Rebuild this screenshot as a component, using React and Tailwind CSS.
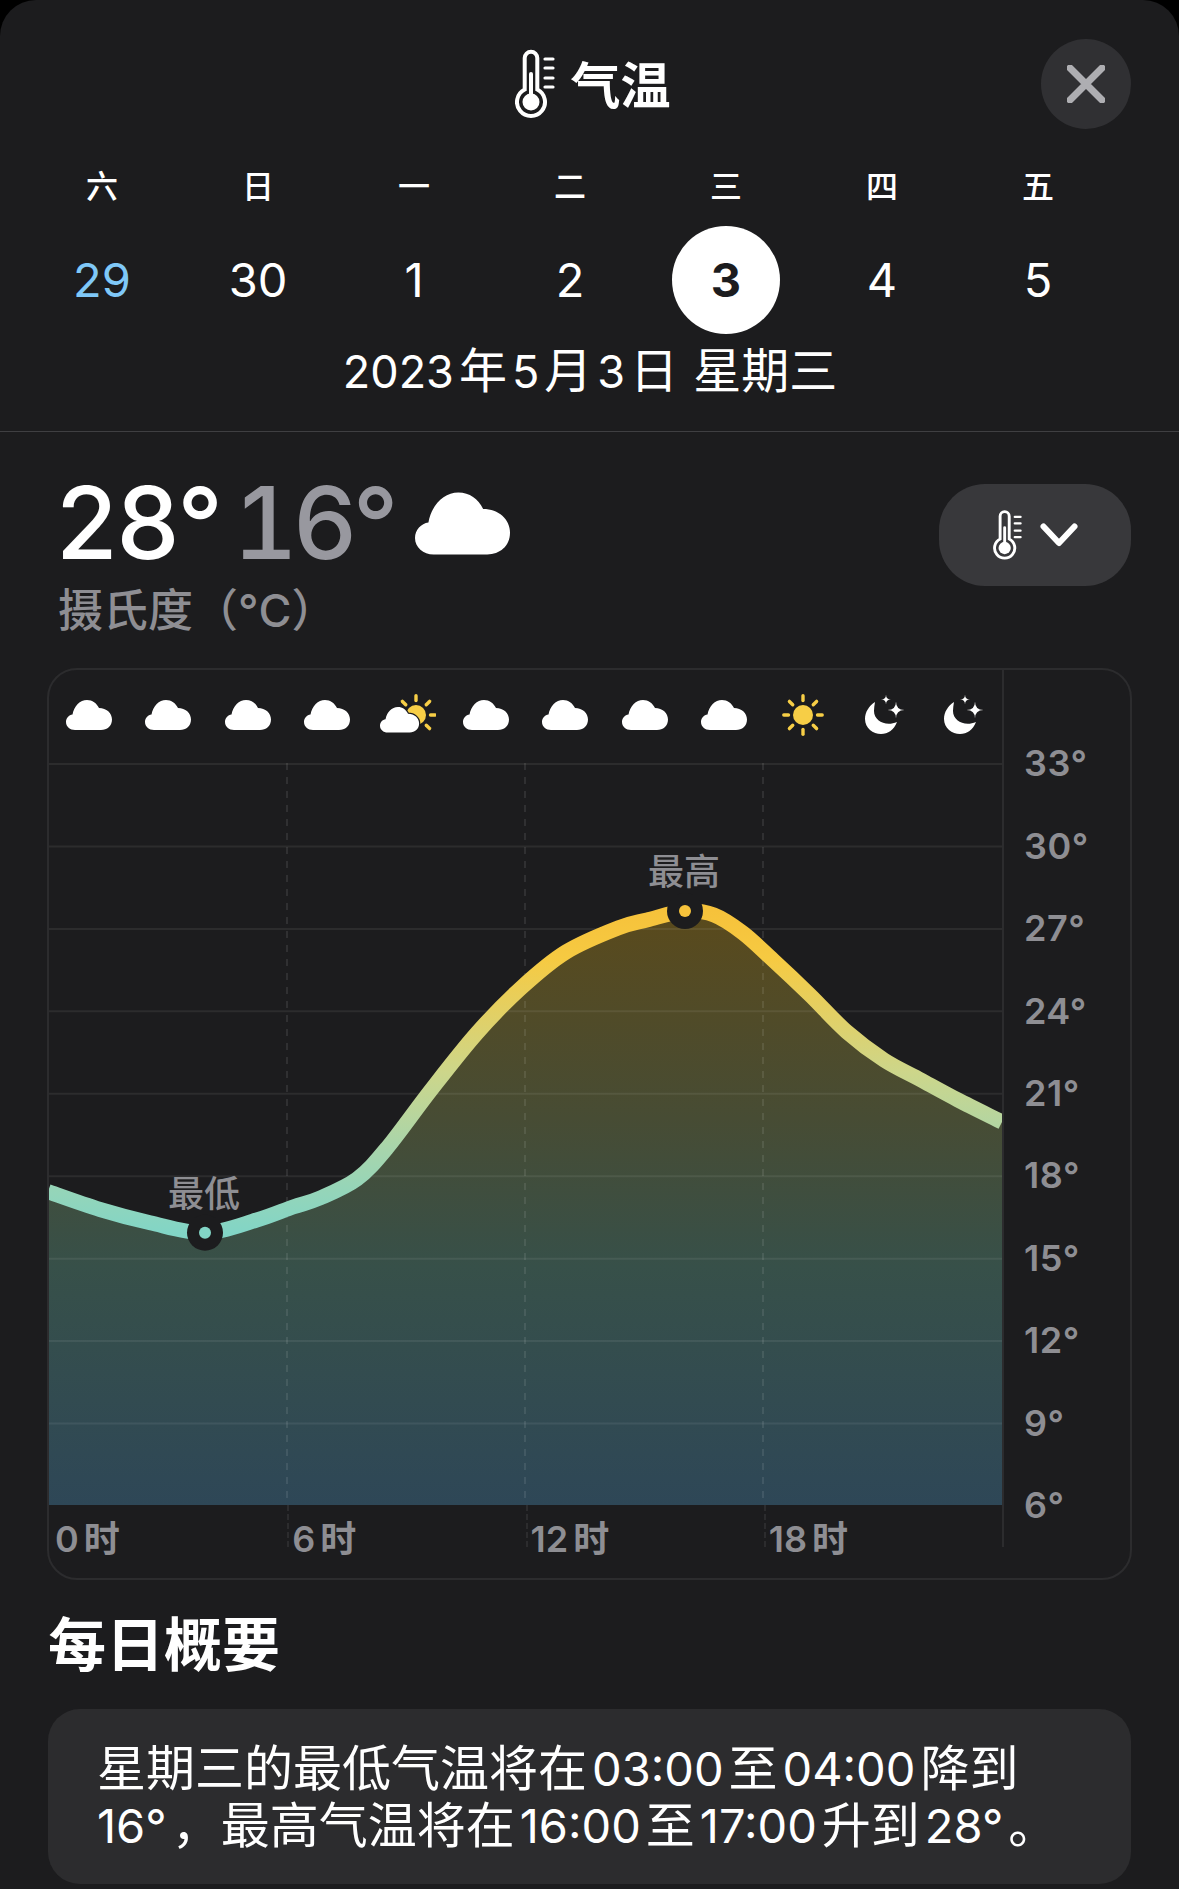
import React from "react";

const PTS = [[48,1191.7],[100,1209.5],[150,1222.7],[205,1232.7],[256.7,1220],[293,1207],[320,1198],[357,1179],[387,1148],[431,1090],[477,1033],[521,988],[566,952],[618,928],[647,920],[685,911],[714,915],[743,933],[773,960],[810,995],[847,1032],[884,1060],[921,1080],[958,1100],[1002,1122]]
  .map(([x, y]) => [x - 49, y - 763]);

function curve(p) {
  let d = `M${p[0][0]} ${p[0][1]}`;
  for (let i = 0; i < p.length - 1; i++) {
    const a = p[Math.max(i - 1, 0)], b = p[i], c = p[i + 1], e = p[Math.min(i + 2, p.length - 1)];
    const c1 = [b[0] + (c[0] - a[0]) / 6, b[1] + (c[1] - a[1]) / 6];
    const c2 = [c[0] - (e[0] - b[0]) / 6, c[1] - (e[1] - b[1]) / 6];
    d += ` C${c1[0].toFixed(1)} ${c1[1].toFixed(1)} ${c2[0].toFixed(1)} ${c2[1].toFixed(1)} ${c[0].toFixed(1)} ${c[1].toFixed(1)}`;
  }
  return d;
}
const LINE = curve(PTS);
const AREA = `${LINE} L953 742 L-1 742 Z`;
const CLOUD = "M9 30C4 30 0 26.5 0 22C0 18 3 15 6.5 14.5C8 6 14 0 21 0C26.5 0 30.5 3 33 8C40.5 8 46 13 46 19.5C46 26 41 30 35 30Z";
const star = (x, y, r) => `M${x} ${y - r}Q${x} ${y} ${x + r} ${y}Q${x} ${y} ${x} ${y + r}Q${x} ${y} ${x - r} ${y}Q${x} ${y} ${x} ${y - r}Z`;

function Thermo({ className }) {
  return (
    <svg viewBox="0 0 44 72" className={className} fill="none">
      <path d="M9.7 41.5V10a6.3 6.3 0 0 1 12.6 0V41.5a14 14 0 1 1-12.6 0Z" stroke="#fff" strokeWidth="4" />
      <path d="M16 26V50" stroke="#fff" strokeWidth="4" strokeLinecap="round" />
      <circle cx="16" cy="54" r="8.5" fill="#fff" />
      <path d="M30 11H38M30 20H38M30 30H38M30 39H38" stroke="#fff" strokeWidth="3.2" strokeLinecap="round" />
    </svg>
  );
}
function Cloud({ className = "w-[46px] h-[30px]" }) {
  return <svg viewBox="0 0 46 30" className={className}><path d={CLOUD} fill="#fff" /></svg>;
}
function Sun() {
  return (
    <svg viewBox="0 0 42 42" className="w-[42px] h-[42px]">
      <circle cx="21" cy="21" r="10" fill="#f7ce46" />
      {[0, 45, 90, 135, 180, 225, 270, 315].map((a) => (
        <line key={a} x1="21" y1="6.5" x2="21" y2="1.8" stroke="#f7ce46" strokeWidth="3.4" strokeLinecap="round" transform={`rotate(${a} 21 21)`} />
      ))}
    </svg>
  );
}
function Moon() {
  return (
    <svg viewBox="0 0 40 42" className="w-[40px] h-[42px] ml-[4px]">
      <path d="M10 8C4 12 0 18 0 25C0 34 8 40 16 40C23 40 29 36 32 28C21 33 9 27 9 17C9 14 9.5 11 10 8Z" fill="#fff" />
      <path d={star(31, 16, 8.5)} fill="#fff" />
      <path d={star(21, 5.5, 5)} fill="#fff" />
    </svg>
  );
}
function Partly() {
  return (
    <svg viewBox="0 0 56 42" className="w-[56px] h-[42px] ml-[3px]">
      <circle cx="36" cy="21" r="10" fill="#f7ce46" />
      {[-45, 0, 45, 90, 135].map((a) => (
        <line key={a} x1="36" y1="6.5" x2="36" y2="1.8" stroke="#f7ce46" strokeWidth="3.4" strokeLinecap="round" transform={`rotate(${a} 36 21)`} />
      ))}
      <g transform="translate(0 13) scale(0.85)">
        <path d={CLOUD} fill="#fff" stroke="#1c1c1e" strokeWidth="3" paintOrder="stroke" />
      </g>
    </svg>
  );
}

function Mixed({ text, numClass }) {
  return text.split(/([\d:]+°?)/).filter(Boolean).map((part, i) =>
    /^\d/.test(part) ? <span key={i} className={numClass}>{part}</span> : <span key={i}>{part}</span>
  );
}

const WEEK = ["六", "日", "一", "二", "三", "四", "五"];
const DAYS = ["29", "30", "1", "2", "3", "4", "5"];
const ICONS = ["c", "c", "c", "c", "p", "c", "c", "c", "c", "s", "m", "m"];
const TEMPS = ["33°", "30°", "27°", "24°", "21°", "18°", "15°", "12°", "9°", "6°"];
const HOURS = ["0 时", "6 时", "12 时", "18 时"];
const GRID = [0, 1, 2, 3, 4, 5, 6, 7, 8, 9].map((i) => i * 82.44);

export default function App() {
  return (
    <div className="bg-black w-[1179px] h-[1889px] overflow-hidden [font-family:Inter,'Noto_Sans_CJK_SC',sans-serif] text-white">
      <div className="bg-[#1c1c1e] rounded-t-[36px] h-[1889px]">
        <header className="border-b border-[#3f3f42] pt-[39px] h-[432px]">
          <div className="grid grid-cols-[1fr_auto_1fr] items-center pl-[49px] pr-[48px] h-[90px]">
            <div />
            <div className="flex items-center gap-[12px] ml-[5px]">
              <Thermo className="w-[44px] h-[72px]" />
              <span className="text-[50px] leading-[60px] font-semibold pt-[4px]">气温</span>
            </div>
            <div className="flex justify-end">
              <button className="w-[90px] h-[90px] rounded-full bg-[#303033] flex items-center justify-center">
                <svg viewBox="0 0 38 38" className="w-[38px] h-[38px]">
                  <path d="M3 3L35 35M35 3L3 35" stroke="#aeaeb2" strokeWidth="7" strokeLinecap="round" />
                </svg>
              </button>
            </div>
          </div>
          <div className="flex pl-[24px] mt-[38px] h-[40px] items-center">
            {WEEK.map((w, i) => (
              <div key={i} className="w-[156px] shrink-0 text-center text-[32px] leading-[40px] font-medium">{w}</div>
            ))}
          </div>
          <div className="flex pl-[24px] mt-[19px] h-[108px] items-center">
            {DAYS.map((d, i) => (
              <div key={i} className="w-[156px] shrink-0 flex justify-center">
                <div className={`w-[108px] h-[108px] rounded-full flex items-center justify-center text-[47px] ${i === 4 ? "bg-white text-[#1c1c1e] font-bold" : i === 0 ? "text-[#7fc8f8]" : "text-white"}`}>{d}</div>
              </div>
            ))}
          </div>
          <div className="mt-[10px] h-[54px] pr-[4px] text-center text-[48px] leading-[54px]">
            <Mixed text="2023年5月3日" numClass="text-[45px] mx-[5px]" />
            <span className="ml-[15px]">星期三</span>
          </div>
        </header>

        <section className="flex justify-between pl-[56px] pr-[48px] pt-[36px]">
          <div>
            <div className="flex items-center h-[110px] text-[100px] leading-[110px] font-medium">
              <span className="tracking-[-1px]">28°</span>
              <span className="ml-[11px] text-[#98989f] tabular-nums tracking-[-5px]">16°</span>
              <Cloud className="w-[95px] h-[63px] ml-[22px]" />
            </div>
            <div className="mt-[7px] h-[51px] ml-[2px] text-[45px] leading-[52px] font-medium text-[#8e8e93]">摄氏度（°C）</div>
          </div>
          <button className="mt-[16px] w-[192px] h-[102px] rounded-[46px] bg-[#38383b] flex items-center justify-center gap-[15px]">
            <Thermo className="w-[32px] h-[52px]" />
            <svg viewBox="0 0 38 24" className="w-[38px] h-[24px]">
              <path d="M3.5 3.5L19 20L34.5 3.5" fill="none" stroke="#fff" strokeWidth="6" strokeLinecap="round" strokeLinejoin="round" />
            </svg>
          </button>
        </section>

        <section className="mt-[32px] ml-[47px] w-[1085px] h-[912px] rounded-[30px] border-2 border-[#2c2c2e] overflow-hidden">
          <div className="flex">
            <div className="w-[953px]">
              <div className="grid grid-cols-12 h-[89px] items-center">
                {ICONS.map((k, i) => (
                  <div key={i} className="flex justify-center">
                    {k === "c" ? <Cloud /> : k === "p" ? <Partly /> : k === "s" ? <Sun /> : <Moon />}
                  </div>
                ))}
              </div>
              <div className="relative h-[746px] pt-[4px]">
                <svg viewBox="0 0 953 742" className="block w-[953px] h-[742px]">
                  <defs>
                    <linearGradient id="fillG" gradientUnits="userSpaceOnUse" x1="0" y1="148" x2="0" y2="742">
                      <stop offset="0" stopColor="#5a4a1c" />
                      <stop offset="0.35" stopColor="#474c34" />
                      <stop offset="0.6" stopColor="#375049" />
                      <stop offset="1" stopColor="#2e4757" />
                    </linearGradient>
                    <linearGradient id="lineG" gradientUnits="userSpaceOnUse" x1="0" y1="148" x2="0" y2="470">
                      <stop offset="0" stopColor="#f6c23b" />
                      <stop offset="0.15" stopColor="#f6ca42" />
                      <stop offset="0.5" stopColor="#cdd68a" />
                      <stop offset="0.75" stopColor="#a6d5ad" />
                      <stop offset="1" stopColor="#82d5c6" />
                    </linearGradient>
                  </defs>
                  <path d={AREA} fill="url(#fillG)" />
                  {GRID.map((y) => (
                    <line key={y} x1="0" x2="953" y1={y + 1} y2={y + 1} stroke="#fff" strokeOpacity="0.07" strokeWidth="2" />
                  ))}
                  {[238, 476, 714].map((x) => (
                    <line key={x} x1={x} x2={x} y1="0" y2="742" stroke="#fff" strokeOpacity="0.09" strokeWidth="2" strokeDasharray="7 7" />
                  ))}
                  <path d={LINE} fill="none" stroke="url(#lineG)" strokeWidth="15" />
                  <circle cx="156" cy="469.7" r="18" fill="#1c1c1e" />
                  <circle cx="156" cy="469.7" r="6" fill="#82d5c6" />
                  <circle cx="636" cy="148" r="18" fill="#1c1c1e" />
                  <circle cx="636" cy="148" r="6" fill="#f6c23b" />
                </svg>
                <div className="absolute left-[155px] top-[413px] -translate-x-1/2 text-[36px] leading-[44px] font-medium text-[#8e8e93]">最低</div>
                <div className="absolute left-[635px] top-[91px] -translate-x-1/2 text-[36px] leading-[44px] font-medium text-[#8e8e93]">最高</div>
              </div>
              <div className="grid grid-cols-4 grid-rows-[42px] h-[42px]">
                {HOURS.map((h, i) => (
                  <div key={h} className={`h-[42px] ${i ? "pl-[3px] border-l-2 border-dashed border-[#2c2c2e]" : "pl-[6px]"}`}>
                    <span className="block pt-[14px] text-[36px] leading-[40px] font-semibold text-[#8e8e93] whitespace-nowrap [word-spacing:-4px]">{h}</span>
                  </div>
                ))}
              </div>
            </div>
            <div className="w-[127px] h-[877px] border-l-2 border-[#2c2c2e] pl-[20px] pt-[52px]">
              {TEMPS.map((t) => (
                <div key={t} className="h-[82.44px] flex items-center text-[36px] tracking-[0.5px] font-semibold text-[#8e8e93]">{t}</div>
              ))}
            </div>
          </div>
        </section>

        <h2 className="ml-[48px] mt-[30px] h-[70px] text-[58px] leading-[70px] font-bold">每日概要</h2>
        <div className="mx-[48px] mt-[29px] h-[175px] rounded-[32px] bg-[#2c2c2e] pl-[49px] pr-[20px] pt-[31px] text-[49px] leading-[57px]">
          <div className="h-[57px] whitespace-nowrap"><Mixed text="星期三的最低气温将在03:00至04:00降到" numClass="text-[47px] mx-[5px]" /></div>
          <div className="h-[57px] whitespace-nowrap"><Mixed text="16°，最高气温将在16:00至17:00升到28°。" numClass="text-[47px] mx-[5px] first:ml-0" /></div>
        </div>
      </div>
    </div>
  );
}
